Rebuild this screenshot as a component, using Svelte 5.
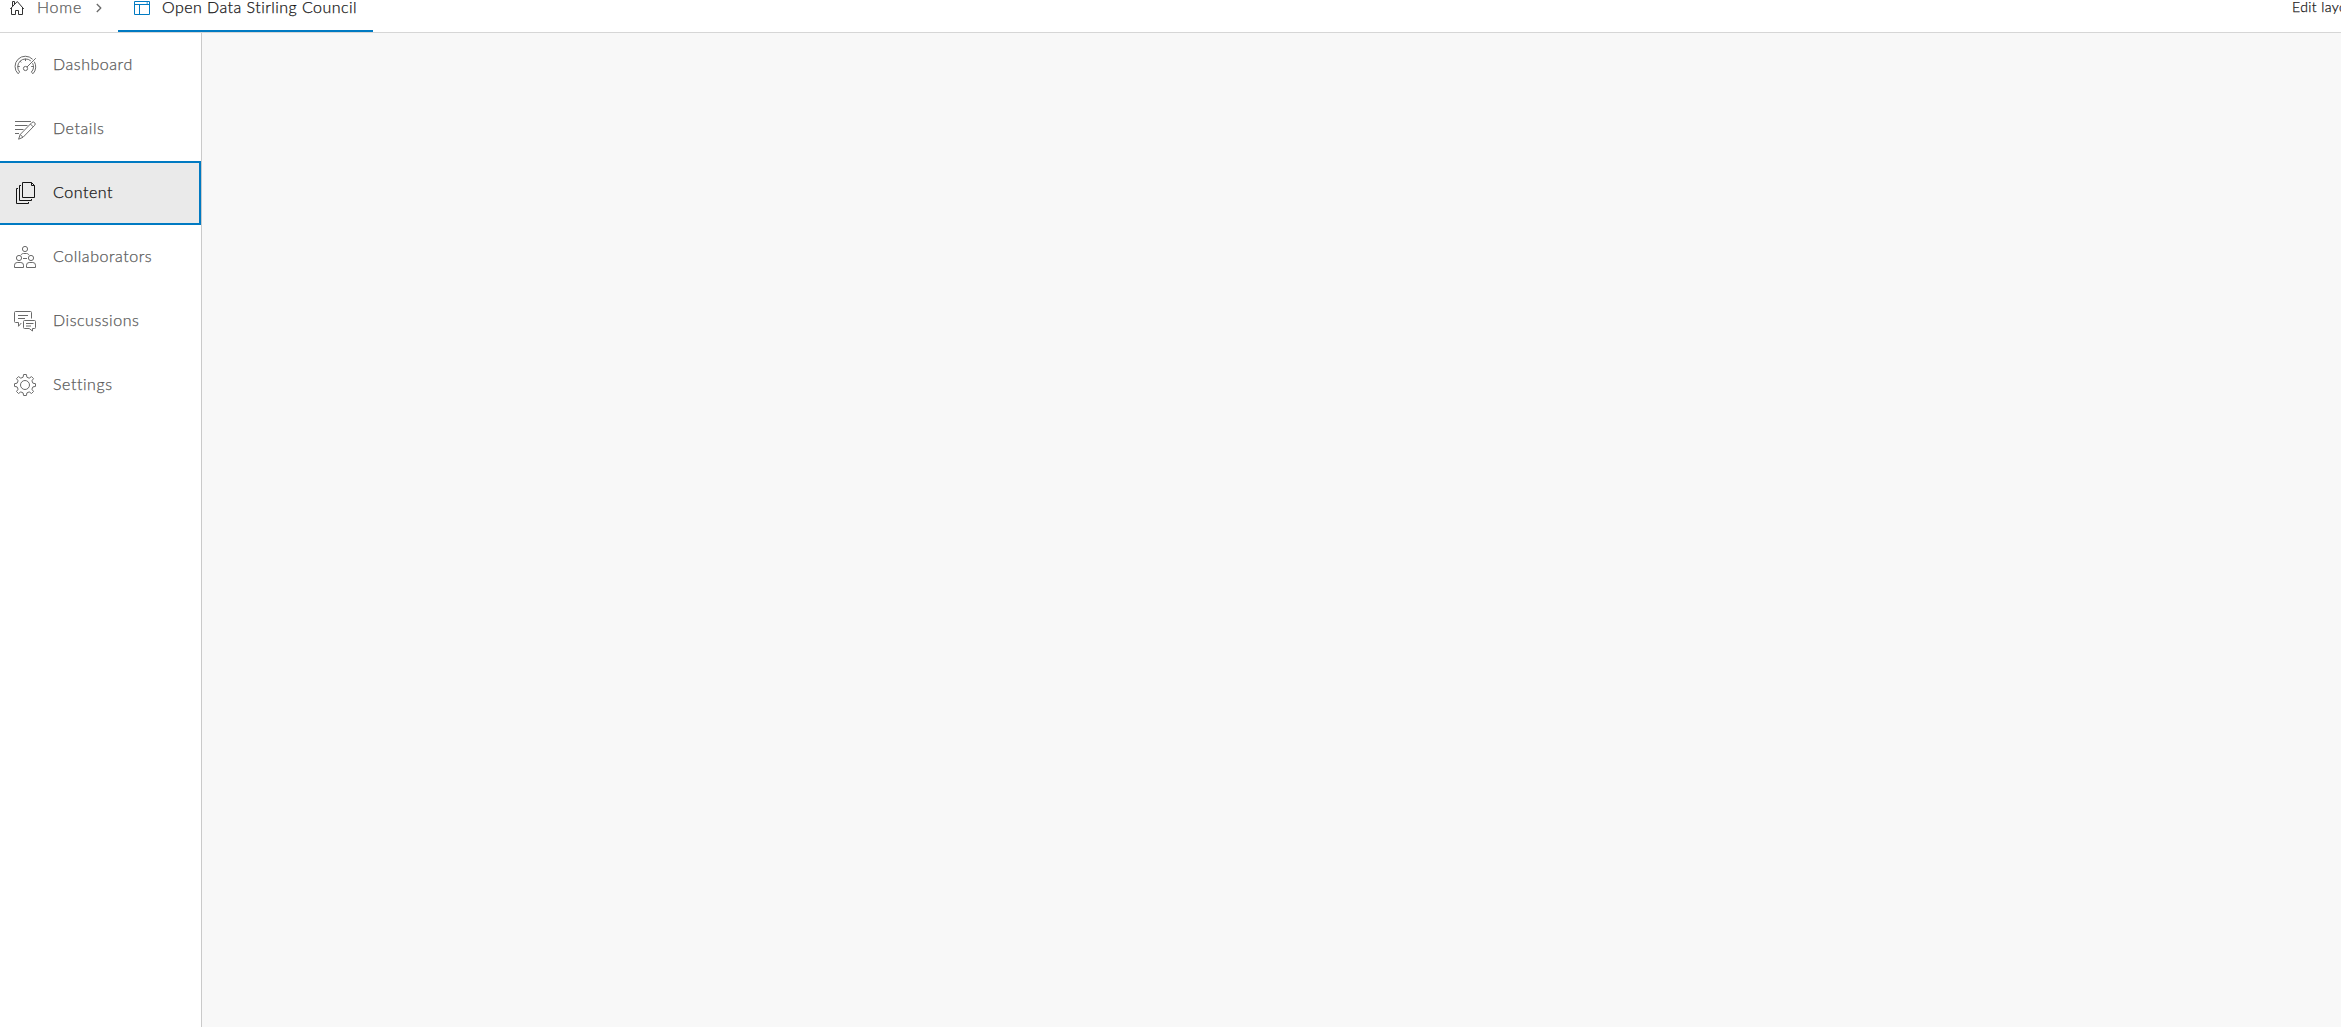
<script>
	let active = "Content";

	const items = [
		{ name: "Dashboard", icon: "dashboard" },
		{ name: "Details", icon: "details" },
		{ name: "Content", icon: "content" },
		{ name: "Collaborators", icon: "collaborators" },
		{ name: "Discussions", icon: "discussions" },
		{ name: "Settings", icon: "settings" },
	];
</script>

<div class="page">
	<header>
		<a class="home" href="#home">
			<svg width="16" height="16" viewBox="0 0 16 16">
				<path d="M1.2 9 8.3 1.5 14.8 9M3.5 6.5v-5h2v3M2.5 8v6.5h4v-4h3v4h4V8" />
			</svg>
			<span>Home</span>
		</a>
		<svg class="chevron" width="6" height="10" viewBox="0 0 6 10">
			<path d="M.8 1 4.8 5 .8 9" />
		</svg>
		<div class="tab">
			<svg width="16" height="16" viewBox="0 0 16 16">
				<path d="M.5 1.5h15v13H.5zM.5 4.5h15M5.5 4.5v10M12.5 3h1.5" />
			</svg>
			<span>Open Data Stirling Council</span>
		</div>
		<button class="edit">Edit layout</button>
	</header>

	<div class="body">
		<nav>
			{#each items as item}
				<button
					class="item"
					class:active={active === item.name}
					on:click={() => (active = item.name)}
				>
					<svg width="24" height="24" viewBox="0 0 24 24">
						{#if item.icon === "dashboard"}
							<path d="M5 20.7A10 10 0 0 1 19.6 6.3M21.3 8.7A10 10 0 0 1 20 20.7M5 20.7l1.7-1.6A7.9 7.9 0 0 1 17.8 7.9M19.6 10.2a7.9 7.9 0 0 1-1.3 8.9l1.7 1.6" />
							<path d="M12.5 5.7V8M6.8 8l1.4 1.4M4.6 13.5h2.2M18.2 13.5h2M14 14l8.8-8.8" />
							<circle cx="12.5" cy="15.5" r="2.1" />
						{:else if item.icon === "details"}
							<path d="M2 4.5h16M2 8.5h12.5M2 12.5h8.5M2 16.5h4" />
							<path d="M5.6 22.2 7.2 17.5 18.8 5.6a1.9 1.9 0 0 1 2.8 2.8L10 20.3zM7.2 17.5l2.8 2.8M17.4 7l2.8 2.8" />
						{:else if item.icon === "content"}
							<path d="M9.5 1.5h9l3 3v12h-12zM18.5 1.5v3h3" />
							<path d="M8 4.5H6.5v15h12V18M5 7.5H3.5v15h12V21" />
						{:else if item.icon === "collaborators"}
							<circle cx="12" cy="4" r="2.6" />
							<circle cx="6" cy="13" r="2.6" />
							<circle cx="18" cy="13" r="2.6" />
							<path d="M8 10.2c.5-1.2 1.3-1.7 2.5-1.7h3c1.2 0 2 .5 2.5 1.7M10 13.5h4" />
							<path d="M1.5 22.5v-2.3q0-2.7 2.7-2.7h3.6q2.7 0 2.7 2.7v2.3zM13.5 22.5v-2.3q0-2.7 2.7-2.7h3.6q2.7 0 2.7 2.7v2.3z" />
						{:else if item.icon === "discussions"}
							<path d="M18.5 9.5v-6q0-1-1-1h-15q-1 0-1 1v9q0 1 1 1h3v3.8l2.8-3.3M5 6.5h10M5 9.5h7" />
							<path d="M11.5 11.5h10q1 0 1 1v6q0 1-1 1h-2V22l-3.3-2.5h-4.7q-1 0-1-1v-6q0-1 1-1zM13 14.5h7.5M13 17h5" />
						{:else}
							<circle cx="12" cy="12" r="4.5" />
							<path d="M10.6 1.5h2.8l.5 2.7 2.3 1 2.3-1.6 2 2-1.6 2.2 1 2.4 2.6.5v2.7l-2.6.5-1 2.3 1.6 2.3-2 2-2.3-1.6-2.3 1-.5 2.6h-2.8l-.5-2.6-2.3-1-2.3 1.6-2-2 1.6-2.3-1-2.3-2.6-.5v-2.7l2.6-.5 1-2.4-1.6-2.2 2-2 2.3 1.6 2.3-1z" />
						{/if}
					</svg>
					<span>{item.name}</span>
				</button>
			{/each}
		</nav>
		<main></main>
	</div>
</div>

<style>
	:global(body) {
		margin: 0;
		font-family: "Lato", sans-serif;
		font-weight: 300;
		background-color: #f8f8f8;
	}

	* {
		box-sizing: border-box;
	}

	.page {
		display: flex;
		flex-direction: column;
		height: 100vh;
		overflow: hidden;
	}

	header {
		display: flex;
		align-items: flex-start;
		height: 33px;
		padding-left: 9px;
		border-bottom: 1px solid #d6d6d6;
		background-color: #fff;
		font-size: 16px;
		line-height: 14px;
		white-space: nowrap;
	}

	svg {
		display: block;
		flex: none;
		fill: none;
		stroke: currentColor;
		stroke-linejoin: round;
	}

	span,
	.edit {
		-webkit-text-stroke: 0.25px currentColor;
	}

	.home {
		display: flex;
		gap: 12px;
		width: 87px;
		color: #5a5a5a;
		letter-spacing: 0.75px;
		text-decoration: none;
	}

	.home svg {
		color: #323232;
	}

	.chevron {
		margin-top: 3px;
		color: #6a6a6a;
		stroke-width: 1.3;
	}

	.tab {
		display: flex;
		gap: 12px;
		width: 255px;
		height: 32px;
		margin-left: 16px;
		padding-left: 16px;
		border-bottom: 2px solid #007ac2;
		color: #151515;
		letter-spacing: 0.46px;
	}

	.tab svg {
		color: #007ac2;
	}

	button {
		padding: 0;
		border: none;
		background: none;
		font-family: inherit;
		font-weight: inherit;
		cursor: pointer;
	}

	.edit {
		flex: none;
		width: 49px;
		margin-left: auto;
		overflow: hidden;
		color: #151515;
		font-size: 14px;
		line-height: 14px;
		letter-spacing: 0.4px;
		text-align: left;
	}

	.body {
		display: flex;
		flex: 1;
	}

	nav {
		display: flex;
		flex-direction: column;
		width: 202px;
		border-right: 1px solid #cacaca;
		background-color: #fff;
	}

	.item {
		display: flex;
		align-items: center;
		gap: 16px;
		height: 64px;
		padding: 0 11px;
		border: 2px solid transparent;
		color: #5a5a5a;
		font-size: 16px;
		letter-spacing: 0.55px;
	}

	.item svg {
		color: #6a6a6a;
	}

	.item span {
		padding-bottom: 3px;
	}

	.item.active {
		border-color: #007ac2;
		border-left: none;
		padding-left: 13px;
		background-color: #eaeaea;
		color: #151515;
	}

	.item.active svg {
		color: #151515;
	}

	main {
		flex: 1;
		background-color: #f8f8f8;
	}
</style>
